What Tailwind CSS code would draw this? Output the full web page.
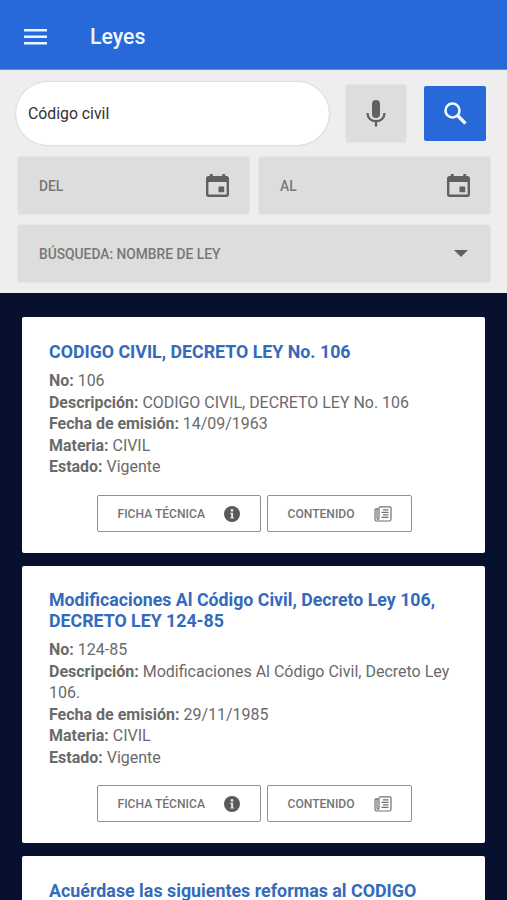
<!DOCTYPE html>
<html lang="es">
<head>
<meta charset="utf-8">
<title>Leyes</title>
<script src="https://cdn.jsdelivr.net/npm/@tailwindcss/browser@4"></script>
</head>
<body class="bg-[#07102f] font-[Roboto,'Liberation_Sans',sans-serif] text-[#6a6a6a] h-[900px] overflow-hidden">
<svg class="hidden">
  <symbol id="calendar" viewBox="64 64 384 384"><path d="M368 272h-96v96h96v-96zM336 64v32H176V64h-48v32h-24c-22 0-40 18-40 40v272c0 22 18 40 40 40h304c22 0 40-18 40-40V136c0-22-18-40-40-40h-24V64h-48zm72 344H104V196h304v212z"/></symbol>
  <symbol id="info" viewBox="0 0 16 16"><circle cx="8" cy="8" r="8" fill="#5a5a5a"/><path d="M8 3a1.4 1.4 0 1 1 0 2.8A1.4 1.4 0 0 1 8 3zM6.2 6.8h2.9v4.6h.9v1.2H6.2v-1.2h.9V8h-.9z" fill="#e4e4e4"/></symbol>
  <symbol id="news" viewBox="0 0 18 16"><g fill="none" stroke="#707070" stroke-width="1.2"><path d="M5 1.8Q5 .8 6 .8h10q1 0 1 1v11.4q0 1.8-1.8 1.8H2.8Q1 15 1 13.200V4q0-1.200 1.200-1.200H5v9.400q0 1.200-1 1.200t-1-1.200V3"/><path d="M9 3.800h5.500M7.500 6.300h7M9 8.800h5.500M7.500 11.300h7"/></g></symbol>
</svg>
<header class="h-[70px] bg-[#2769d8] border-b border-[#5b8ce0] flex items-center pl-6 pt-1">
  <svg class="w-[23px] h-4" viewBox="0 0 23 16" fill="#e9f6ff"><path d="M0 0h23v2.600H0zM0 6.500h23v2.600H0zM0 13h23v2.600H0z"/></svg>
  <h1 class="ml-[43px] text-[21.300px] leading-6 font-medium text-[#edf6ff]">Leyes</h1>
</header>
<section class="h-[223px] bg-[#eeeeee] pt-3">
  <div class="flex items-center pl-4 h-[63px]">
    <div class="w-[313px] h-[63px] rounded-full bg-white shadow-[0_0_2px_rgba(0,0,0,0.22)] flex items-center pl-3 text-[15.800px] text-[#303030]">Código civil</div>
    <button class="ml-[17px] w-[60px] h-[57px] rounded-[2px] bg-[#dddddd] shadow-[0_0_2px_rgba(0,0,0,0.12)] flex items-center justify-center">
      <svg class="w-5 h-[27px]" viewBox="0 0 20 27"><rect x="6" y="0" width="8" height="18" rx="4" fill="#606060"/><path d="M1.500 13c0 5 3.600 8.200 8.500 8.200s8.500-3.200 8.500-8.200M10 21v5.500" fill="none" stroke="#606060" stroke-width="2.300"/></svg>
    </button>
    <button class="ml-[18px] w-[62px] h-[55px] rounded-[2px] bg-[#2769d8] flex items-center justify-center">
      <svg class="w-[23px] h-[23px]" viewBox="0 0 23 23" fill="none" stroke="#eef9ff"><circle cx="8.500" cy="8.500" r="7" stroke-width="2.600"/><path d="M13.500 13.500l8 8" stroke-width="3.300"/></svg>
    </button>
  </div>
  <div class="mt-3 mx-[17px] pl-px flex gap-[10px] text-[13.800px] font-medium text-[#777777]">
    <div class="flex-1 h-[57px] rounded-[2px] bg-[#dddddd] shadow-[0_0_2px_rgba(0,0,0,0.12)] flex items-center justify-between pl-[21px] pr-5"><span class="pt-px">DEL</span><svg class="w-[23px] h-[23px]" fill="#606060"><use href="#calendar"/></svg></div>
    <div class="flex-1 h-[57px] rounded-[2px] bg-[#dddddd] shadow-[0_0_2px_rgba(0,0,0,0.12)] flex items-center justify-between pl-[21px] pr-5"><span class="pt-px">AL</span><svg class="w-[23px] h-[23px]" fill="#606060"><use href="#calendar"/></svg></div>
  </div>
  <div class="mt-[11px] ml-[18px] mr-[17px] h-[57px] rounded-[2px] bg-[#dddddd] shadow-[0_0_2px_rgba(0,0,0,0.12)] flex items-center justify-between pl-[21px] pr-[22px] text-[13.800px] font-medium text-[#777777]"><span class="pt-px">BÚSQUEDA: NOMBRE DE LEY</span><svg class="w-[14px] h-[7px]" viewBox="0 0 14 7" fill="#606060"><path d="M0 0h14L7 7z"/></svg></div>
</section>
<main class="pt-6 pl-[22px] pr-[22px] flex flex-col gap-[13px]">
  <article class="h-[236px] shrink-0 rounded-[2px] bg-white pl-[27px] pr-5 pt-6">
    <h2 class="text-[17.800px] leading-[21px] font-bold text-[#346abb]">CODIGO CIVIL, DECRETO LEY No. 106</h2>
    <div class="mt-2 text-[15.940px] leading-[21.500px]">
      <p><b>No:</b> 106</p><p><b>Descripción:</b> CODIGO CIVIL, DECRETO LEY No. 106</p><p><b>Fecha de emisión:</b> 14/09/1963</p><p><b>Materia:</b> CIVIL</p><p><b>Estado:</b> Vigente</p>
    </div>
    <div class="mt-[17.500px] ml-[47.500px] flex gap-[6px] text-[12.100px] font-medium text-[#747474]">
      <button class="w-[164px] h-[37px] border border-[#909090] rounded-[2px] flex items-center justify-between pl-5 pr-5"><span class="pt-px">FICHA TÉCNICA</span><svg class="w-4 h-4"><use href="#info"/></svg></button>
      <button class="w-[145px] h-[37px] border border-[#909090] rounded-[2px] flex items-center justify-between pl-5 pr-[19px]"><span class="pt-px">CONTENIDO</span><svg class="w-[18px] h-4"><use href="#news"/></svg></button>
    </div>
  </article>
  <article class="h-[277px] shrink-0 rounded-[2px] bg-white pl-[27px] pr-5 pt-6">
    <h2 class="text-[17.750px] leading-[20.500px] font-bold text-[#346abb]">Modificaciones Al Código Civil, Decreto Ley 106,<br>DECRETO LEY 124-85</h2>
    <div class="mt-2 text-[16px] leading-[21.500px]">
      <p><b>No:</b> 124-85</p><p><b>Descripción:</b> Modificaciones Al Código Civil, Decreto Ley<br>106.</p><p><b>Fecha de emisión:</b> 29/11/1985</p><p><b>Materia:</b> CIVIL</p><p><b>Estado:</b> Vigente</p>
    </div>
    <div class="mt-[17px] ml-[47.500px] flex gap-[6px] text-[12.100px] font-medium text-[#747474]">
      <button class="w-[164px] h-[37px] border border-[#909090] rounded-[2px] flex items-center justify-between pl-5 pr-5"><span class="pt-px">FICHA TÉCNICA</span><svg class="w-4 h-4"><use href="#info"/></svg></button>
      <button class="w-[145px] h-[37px] border border-[#909090] rounded-[2px] flex items-center justify-between pl-5 pr-[19px]"><span class="pt-px">CONTENIDO</span><svg class="w-[18px] h-4"><use href="#news"/></svg></button>
    </div>
  </article>
  <article class="h-[44px] shrink-0 rounded-t-[2px] bg-white pl-[27px] pr-5 pt-6 overflow-hidden">
    <h2 class="text-[17.850px] leading-[21px] font-bold text-[#346abb]">Acuérdase las siguientes reformas al CODIGO</h2>
  </article>
</main>
</body>
</html>
